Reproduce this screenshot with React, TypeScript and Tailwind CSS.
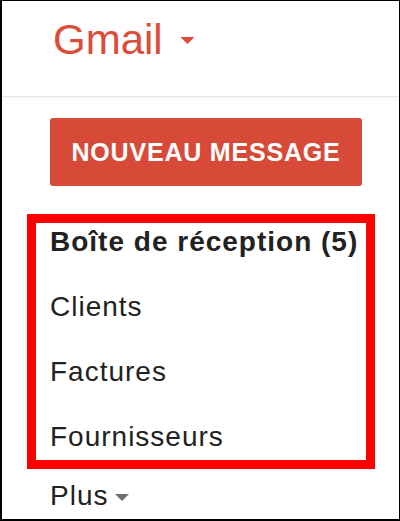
import React from 'react';

const labels = [
  { name: 'Boîte de réception (5)', bold: true },
  { name: 'Clients', bold: false },
  { name: 'Factures', bold: false },
  { name: 'Fournisseurs', bold: false },
];

function Caret({ className, color }: { className: string; color: string }) {
  return (
    <svg className={className} viewBox="0 0 14 7" aria-hidden="true">
      <polygon points="0,0 14,0 7,7" fill={color} />
    </svg>
  );
}

export default function App() {
  return (
    <div
      className="w-[400px] h-[521px] overflow-hidden bg-white border-black border-t border-r border-l-2 border-b-2"
      style={{ fontFamily: '"Liberation Sans", Arial, sans-serif' }}
    >
      {/* header */}
      <div className="h-[96px] border-b border-[#e6e6e6] shadow-[0_2px_3px_rgba(0,0,0,0.04)] pt-[17.5px] pl-[51px]">
        <div className="flex items-center">
          <span className="text-[42px] leading-none text-[#dd4b39]">Gmail</span>
          <Caret className="ml-[17px] mt-[2px] w-[15px] h-[7px]" color="#dd4b39" />
        </div>
      </div>

      {/* compose */}
      <button className="mt-[21px] ml-[48px] w-[312px] h-[68px] rounded-[3px] bg-[#d74a38] flex items-center justify-center">
        <span className="text-white font-bold text-[25px] tracking-[0.8px] leading-none">NOUVEAU MESSAGE</span>
      </button>

      {/* labels, highlighted */}
      <div className="mt-[28px] ml-[25px] w-[348px] border-[9px] border-[#ff0000] pt-[4px] pb-[8px] pl-[14px] flex flex-col gap-[35px]">
        {labels.map((label) => (
          <div
            key={label.name}
            className={`h-[30px] leading-[30px] text-[28px] tracking-[1px] text-[#222] whitespace-nowrap ${
              label.bold ? 'font-bold' : ''
            }`}
          >
            {label.name}
          </div>
        ))}
      </div>

      {/* more */}
      <div className="mt-[12px] pl-[48px] flex items-center h-[30px]">
        <span className="leading-[30px] text-[28px] tracking-[1px] text-[#222]">Plus</span>
        <Caret className="ml-[7px] mt-[3px] w-[14px] h-[7px]" color="#6f6f6f" />
      </div>
    </div>
  );
}
